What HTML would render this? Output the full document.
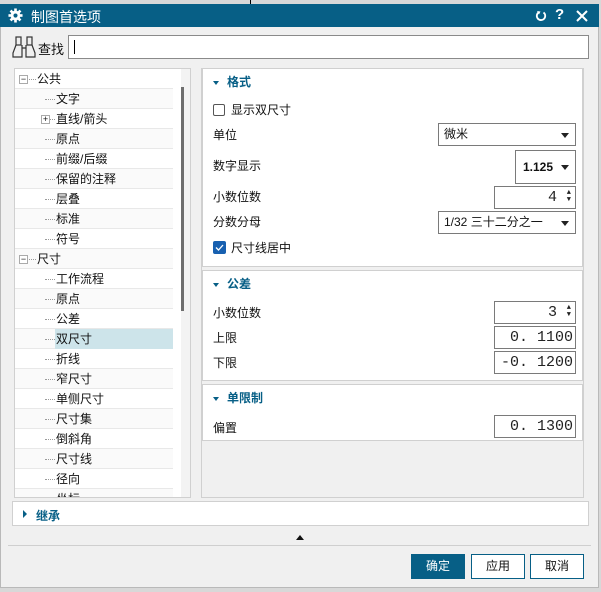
<!DOCTYPE html>
<html><head><meta charset="utf-8"><style>
*{box-sizing:border-box;margin:0;padding:0}
body{width:601px;height:592px;background:#d8d8d8;font-family:"Liberation Sans","Noto Sans CJK SC",sans-serif;font-size:12px;color:#111;position:relative;overflow:hidden}
.a{position:absolute}
#dlg{left:0;top:4px;width:599px;height:584px;background:#f0f0f0;border:1px solid #b9b9b9}
#title{left:0;top:4px;width:599px;height:23px;background:#075f86;color:#fff;font-size:14px}
.box{background:#fff;border:1px solid #d0d0d0}
.row{position:absolute;left:0;width:158px;height:20px;border-bottom:1px solid #e8e8e8;line-height:19px;font-size:12px}
.inp{position:absolute;background:#fff;border:1px solid #7a7a7a;height:23px;line-height:21px;font-size:12px}
.mono{font-family:"Liberation Mono","Noto Sans CJK SC",monospace;font-size:15px;text-align:right;padding-right:2px;overflow:hidden;white-space:nowrap;color:#222}
.dd:after{content:"";position:absolute;right:6px;top:9px;border-left:4px solid transparent;border-right:4px solid transparent;border-top:5px solid #222}
.big:after{top:14px}
.lbl{position:absolute;left:10px;font-size:12px}
.hd{position:absolute;left:10px;top:4px;color:#075f86;font-weight:bold;font-size:12px}
.hd:before{content:"";display:inline-block;border-left:3.5px solid transparent;border-right:3.5px solid transparent;border-top:4px solid #075f86;margin-right:8px;vertical-align:middle}
.btn{position:absolute;top:554px;width:54px;height:25px;border:1px solid #075f86;background:#fff;text-align:center;line-height:23px;font-size:12px}
.sp{position:absolute;right:4px;top:3px;font-size:7px;line-height:7px}
</style></head><body>
<div class="a" style="left:250px;top:0;width:1px;height:4px;background:#000"></div>
<div class="a" id="dlg"></div>
<div class="a" id="title">
 <svg class="a" style="left:8px;top:4px" width="15" height="15" viewBox="0 0 16 16"><g fill="#fff"><circle cx="8" cy="8" r="5.2"/><rect x="6.6" y="0.5" width="2.8" height="15"/><rect x="0.5" y="6.6" width="15" height="2.8"/><rect x="6.6" y="0.5" width="2.8" height="15" transform="rotate(45 8 8)"/><rect x="6.6" y="0.5" width="2.8" height="15" transform="rotate(-45 8 8)"/></g><circle cx="8" cy="8" r="2.2" fill="#075f86"/></svg>
 <span class="a" style="left:31px;top:3px">制图首选项</span>
 <svg class="a" style="left:535px;top:6px" width="12" height="12" viewBox="0 0 12 12"><path d="M4 2.2A4.2 4.2 0 1 0 8.5 2.5" fill="none" stroke="#fff" stroke-width="1.8"/><path d="M2 1 L5.5 1.5 L4 4.5Z" fill="#fff"/></svg>
 <span class="a" style="left:555px;top:2px;font-weight:bold;font-size:15px">?</span>
 <svg class="a" style="left:576px;top:6px" width="12" height="12"><path d="M1 1L11 11M11 1L1 11" stroke="#fff" stroke-width="2"/></svg>
</div>
<svg class="a" style="left:12px;top:35px" width="25" height="24" viewBox="0 0 25 24"><g fill="none" stroke="#333" stroke-width="1.2"><rect x="4" y="2" width="5" height="8"/><rect x="15" y="2" width="5" height="8"/><path d="M4 10L1 18V22H10V10M20 10L23 18V22H14V10M10 13H14"/></g></svg>
<span class="a" style="left:38px;top:39px;font-size:13px">查找</span>
<div class="a" style="left:68px;top:35px;width:521px;height:24px;background:#fff;border:1px solid #8a8a8a"><div class="a" style="left:5px;top:4px;width:1px;height:14px;background:#000"></div></div>

<div class="a box" style="left:14px;top:68px;width:177px;height:430px;overflow:hidden">
 <div class="a" style="left:8px;top:12px;width:0;height:420px;border-left:1px dotted #999"></div>
 <div class="a" style="left:29px;top:20px;width:0;height:150px;border-left:1px dotted #999"></div>
 <div class="a" style="left:29px;top:200px;width:0;height:230px;border-left:1px dotted #999"></div>
 <div class="a" style="left:166px;top:0;width:11px;height:430px;background:#f3f3f3"></div>
 <div class="a" style="left:166px;top:18px;width:3px;height:224px;background:#6e6e6e"></div>
 <div id="rows"></div>
</div>

<div class="a box" style="left:202px;top:68px;width:381px;height:199px">
 <div class="hd">格式</div>
 <div class="a" style="left:10px;top:35px;width:12px;height:12px;border:1px solid #555;border-radius:2px"></div>
 <span class="a" style="left:28px;top:32px">显示双尺寸</span>
 <span class="lbl" style="top:57px">单位</span>
 <div class="inp dd" style="left:235px;top:54px;width:138px;padding-left:5px">微米</div>
 <span class="lbl" style="top:88px">数字显示</span>
 <div class="inp dd big" style="left:312px;top:81px;width:61px;height:34px;line-height:32px;padding-left:7px;font-weight:bold">1.125</div>
 <span class="lbl" style="top:119px">小数位数</span>
 <div class="inp mono" style="left:291px;top:117px;width:82px;padding-right:18px">4<span class="sp">▲<br>▼</span></div>
 <span class="lbl" style="top:144px">分数分母</span>
 <div class="inp dd" style="left:235px;top:142px;width:138px;padding-left:5px">1/32 三十二分之一</div>
 <div class="a" style="left:10px;top:172px;width:13px;height:13px;background:#1760b0;border-radius:2px"><svg width="13" height="13"><path d="M3 6.5L5.5 9L10 4" stroke="#fff" stroke-width="1.3" fill="none"/></svg></div>
 <span class="a" style="left:28px;top:170px">尺寸线居中</span>
</div>
<div class="a box" style="left:202px;top:270px;width:381px;height:111px">
 <div class="hd">公差</div>
 <span class="lbl" style="top:33px">小数位数</span>
 <div class="inp mono" style="left:291px;top:30px;width:82px;padding-right:18px">3<span class="sp">▲<br>▼</span></div>
 <span class="lbl" style="top:58px">上限</span>
 <div class="inp mono" style="left:291px;top:55px;width:82px">0. 1100</div>
 <span class="lbl" style="top:83px">下限</span>
 <div class="inp mono" style="left:291px;top:80px;width:82px">-0. 1200</div>
</div>
<div class="a box" style="left:202px;top:384px;width:381px;height:57px">
 <div class="hd">单限制</div>
 <span class="lbl" style="top:34px">偏置</span>
 <div class="inp mono" style="left:291px;top:30px;width:82px">0. 1300</div>
</div>
<div class="a" style="left:201px;top:68px;width:1px;height:430px;background:#d0d0d0"></div>
<div class="a" style="left:201px;top:497px;width:383px;height:1px;background:#d0d0d0"></div>
<div class="a" style="left:583px;top:68px;width:1px;height:430px;background:#d0d0d0"></div>

<div class="a box" style="left:12px;top:501px;width:577px;height:25px">
 <div class="a" style="left:10px;top:8px;border-top:4px solid transparent;border-bottom:4px solid transparent;border-left:4px solid #075f86"></div>
 <span class="a" style="left:23px;top:5px;color:#075f86;font-weight:bold">继承</span>
</div>
<div class="a" style="left:296px;top:535px;border-left:4px solid transparent;border-right:4px solid transparent;border-bottom:5px solid #111"></div>
<div class="a" style="left:8px;top:545px;width:583px;height:1px;background:#cfcfcf"></div>
<div class="btn" style="left:411px;background:#075f86;color:#fff">确定</div>
<div class="btn" style="left:471px">应用</div>
<div class="btn" style="left:530px">取消</div>
<script>
var items=[["公共",0,1],["文字",1],["直线/箭头",1,2],["原点",1],["前缀/后缀",1],["保留的注释",1],["层叠",1],["标准",1],["符号",1],["尺寸",0,1],["工作流程",1],["原点",1],["公差",1],["双尺寸",1,0,1],["折线",1],["窄尺寸",1],["单侧尺寸",1],["尺寸集",1],["倒斜角",1],["尺寸线",1],["径向",1],["坐标",1]];
var h="";items.forEach(function(it,i){var y=i*20,lv=it[1];var bg=(i%2?"#fafafa":"#fff");
var x=lv?41:22;
h+='<div class="row" style="top:'+y+'px;background:'+bg+'"></div>';
if(it[3])h+='<div class="a" style="left:40px;top:'+y+'px;width:118px;height:20px;background:#cde4ea"></div>';
h+='<div class="a" style="left:'+(lv?30:9)+'px;top:'+(y+10)+'px;width:'+(lv?10:12)+'px;border-top:1px dotted #999"></div>';
if(it[2]){var bx=lv?26:4;h+='<div class="a" style="left:'+bx+'px;top:'+(y+6)+'px;width:9px;height:9px;background:#fff;border:1px solid #aaa;font-size:9px;line-height:7px;text-align:center">'+(it[2]==1?'−':'+')+'</div>';}
h+='<span class="a" style="left:'+x+'px;top:'+(y+1)+'px">'+it[0]+'</span>';});
document.getElementById("rows").innerHTML=h;
</script>
</body></html>
